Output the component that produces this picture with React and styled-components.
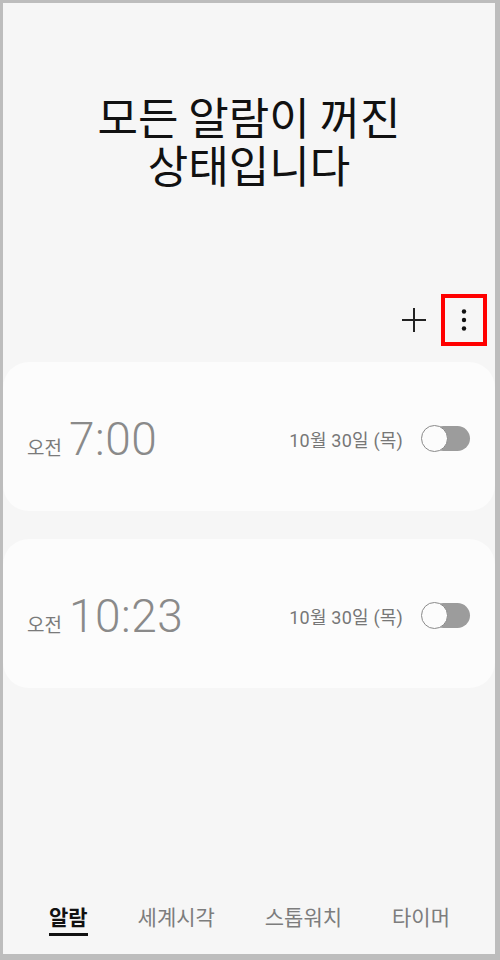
import React from 'react';
import styled, { createGlobalStyle } from 'styled-components';

const Global = createGlobalStyle`
  html, body { margin: 0; padding: 0; background: #bdbdbd; }
  * { box-sizing: border-box; }
`;

const KR = `"Noto Sans CJK KR", "Noto Sans", sans-serif`;
const NUM = `Roboto, "Noto Sans CJK KR", sans-serif`;

const Frame = styled.div`
  width: 500px;
  height: 960px;
  border-style: solid;
  border-color: #bdbdbd;
  border-width: 3px 5px 6px 3px;
  background: #f6f6f6;
  display: flex;
  flex-direction: column;
  font-family: ${KR};
`;

const Title = styled.h1`
  margin: 0;
  padding-top: 89px;
  height: 280px;
  text-align: center;
  font-family: ${KR};
  font-weight: 400;
  font-size: 44px;
  line-height: 48px;
  color: #111;
`;

const Toolbar = styled.div`
  height: 79px;
  display: flex;
  align-items: flex-start;
  justify-content: flex-end;
  padding-right: 8px;
  gap: 14px;
`;

const IconButton = styled.div`
  width: ${p => (p.$marked ? '46px' : '26px')};
  height: 52px;
  margin-top: 11px;
  display: flex;
  align-items: center;
  justify-content: center;
  border: ${p => (p.$marked ? '4px solid #ff0000' : 'none')};
`;

const List = styled.div`
  display: flex;
  flex-direction: column;
  gap: 28px;
`;

const Card = styled.div`
  height: 149px;
  background: #fcfcfc;
  border-radius: 26px;
  display: flex;
  align-items: center;
  padding: 4px 25px 0 24px;
`;

const Meridiem = styled.span`
  font-family: ${KR};
  font-size: 19px;
  color: #7a7a7a;
  margin-right: 7px;
  align-self: center;
  padding-top: 16px;
`;

const Time = styled.span`
  font-family: ${NUM};
  font-weight: 300;
  font-size: 46px;
  color: #8a8a8a;
  letter-spacing: 0.5px;
`;

const DateText = styled.span`
  margin-left: auto;
  font-family: ${NUM};
  font-size: 18px;
  letter-spacing: 0.2px;
  color: #777;
  margin-right: 18px;
`;

const Switch = styled.div`
  position: relative;
  width: 49px;
  height: 27px;
  display: flex;
  align-items: center;
`;

const Track = styled.div`
  margin-left: 10px;
  width: 39px;
  height: 25px;
  border-radius: 13px;
  background: #9c9c9c;
`;

const Knob = styled.div`
  position: absolute;
  left: 0;
  top: 0;
  width: 27px;
  height: 27px;
  border-radius: 50%;
  background: #fcfcfc;
  border: 1.5px solid #8a8a8a;
`;

const Spacer = styled.div`
  flex: 1;
`;

const Tabs = styled.nav`
  height: 52px;
  display: flex;
  justify-content: space-between;
  align-items: flex-start;
  padding: 0 45px 0 46px;
`;

const Tab = styled.div`
  font-family: ${KR};
  font-size: 21px;
  line-height: 28px;
  color: ${p => (p.$active ? '#111' : '#7d7d7d')};
  font-weight: ${p => (p.$active ? 700 : 400)};
  padding-bottom: 3px;
  border-bottom: 3px solid ${p => (p.$active ? '#111' : 'transparent')};
`;

const alarms = [
  { time: '7:00', date: '10월 30일 (목)' },
  { time: '10:23', date: '10월 30일 (목)' },
];

export default function App() {
  return (
    <Frame>
      <Global />
      <Title>
        모든 알람이 꺼진
        <br />
        상태입니다
      </Title>
      <Toolbar>
        <IconButton>
          <svg width="26" height="26" viewBox="0 0 26 26">
            <path d="M13 1v24M1 13h24" stroke="#222" strokeWidth="2" />
          </svg>
        </IconButton>
        <IconButton $marked>
          <svg width="6" height="24" viewBox="0 0 6 24">
            <circle cx="3" cy="3.5" r="2.2" fill="#111" />
            <circle cx="3" cy="12" r="2.2" fill="#111" />
            <circle cx="3" cy="20.5" r="2.2" fill="#111" />
          </svg>
        </IconButton>
      </Toolbar>
      <List>
        {alarms.map(a => (
          <Card key={a.time}>
            <Meridiem>오전</Meridiem>
            <Time>{a.time}</Time>
            <DateText>{a.date}</DateText>
            <Switch>
              <Track />
              <Knob />
            </Switch>
          </Card>
        ))}
      </List>
      <Spacer />
      <Tabs>
        <Tab $active>알람</Tab>
        <Tab>세계시각</Tab>
        <Tab>스톱워치</Tab>
        <Tab>타이머</Tab>
      </Tabs>
    </Frame>
  );
}
